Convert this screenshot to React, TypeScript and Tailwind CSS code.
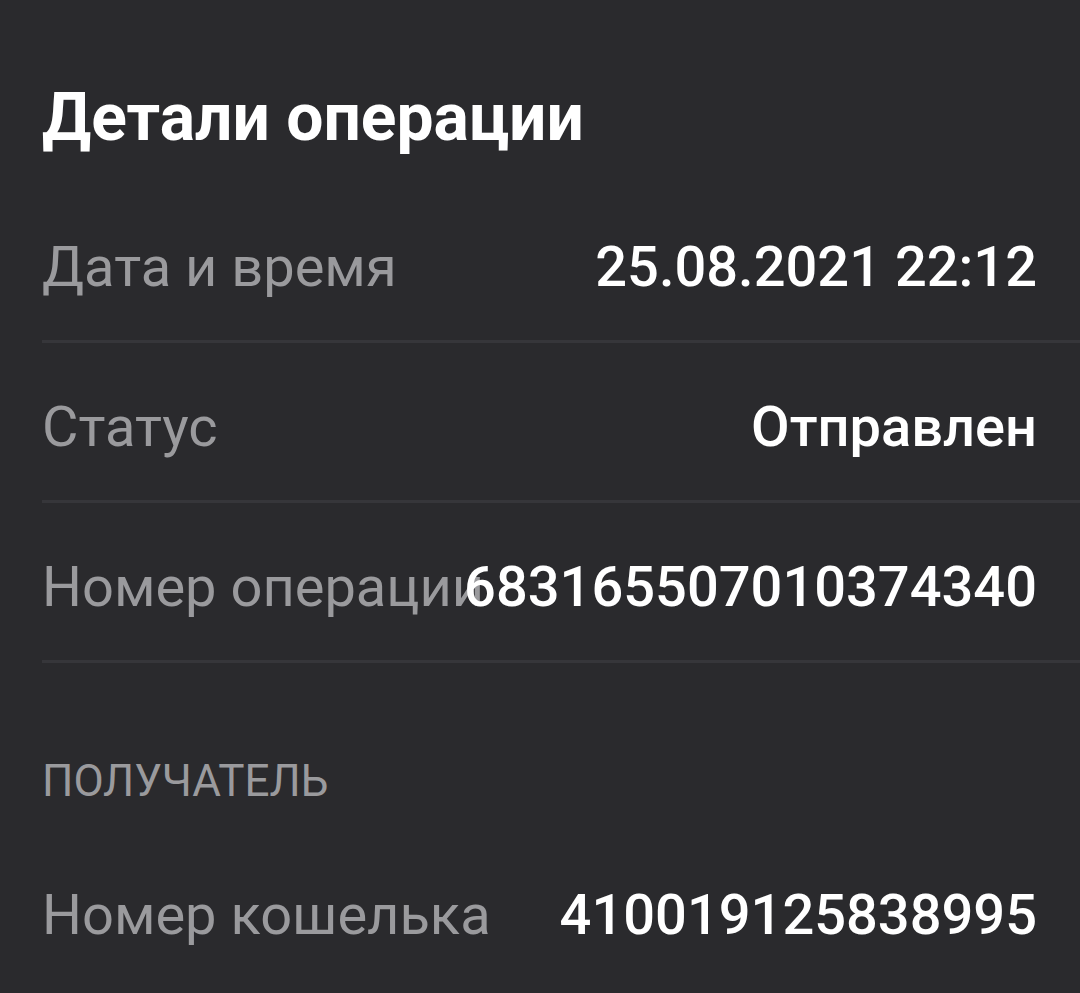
import React from "react";

const Row = ({ label, value, divider = true }: { label: string; value: string; divider?: boolean }) => (
  <div className={`flex h-[160px] items-center pr-[43px] pt-[10px] ${divider ? "border-b-[3px] border-[#36363a]" : ""}`}>
    <span className="min-w-0 flex-1 whitespace-nowrap text-[56px] leading-[66px] text-[#9a9a9d]">{label}</span>
    <span className="shrink-0 whitespace-nowrap text-[56px] leading-[66px] font-medium text-white">{value}</span>
  </div>
);

export default function App() {
  return (
    <div className="min-h-[993px] w-[1080px] bg-[#2a2a2d] pl-[42px] overflow-hidden" style={{ fontFamily: "Roboto, 'Noto Sans', sans-serif" }}>
      <div className="pt-[78px] pb-[25px] text-[66px] font-bold leading-[80px] text-white">Детали операции</div>
      <Row label="Дата и время" value="25.08.2021 22:12" />
      <Row label="Статус" value="Отправлен" />
      <Row label="Номер операции" value="683165507010374340" />
      <div className="pt-[94px] pb-[25px] text-[44px] leading-[48px] text-[#9a9a9d] uppercase">Получатель</div>
      <Row label="Номер кошелька" value="410019125838995" divider={false} />
    </div>
  );
}
